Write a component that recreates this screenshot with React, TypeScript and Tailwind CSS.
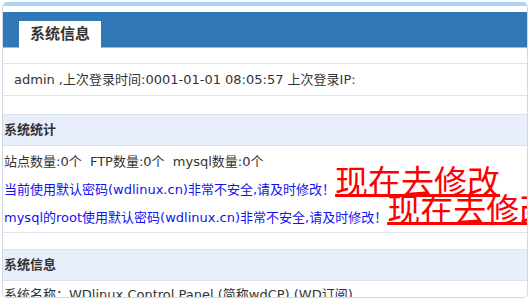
import React from "react";

export default function App() {
  const font = { fontFamily: '"DejaVu Sans", "Noto Sans CJK SC", sans-serif' };
  return (
    <div className="w-[530px] h-[300px] bg-white p-[2px]" style={font}>
      <div className="h-[296px] rounded-[5px] border border-[#d3d7e3] border-t-0 overflow-hidden bg-white text-[13px] text-[#333]">
        <div className="h-[4px] bg-[#a9d2f5]" />
        <div className="h-[6px] bg-white" />
        <div className="h-[36px] bg-[#3178b6] border-b border-[#8fc0ec] flex items-end pl-[16px]">
          <div className="h-[27px] w-[82px] bg-white flex items-center justify-center text-[15px] text-[#333] font-semibold -mb-px">
            系统信息
          </div>
        </div>
        <div className="h-[15px]" />
        <div className="h-[33px] border-y border-[#dfe2ea] flex items-center pl-[11px] whitespace-nowrap">
          admin ,上次登录时间:0001-01-01 08:05:57 上次登录IP:
        </div>
        <div className="h-[18px]" />
        <div className="h-[32px] bg-[#e8eefc] border-y border-[#dde1ec] flex items-center pl-[1px] font-bold">
          系统统计
        </div>
        <div className="leading-[28px] pl-[1px] whitespace-nowrap border-b border-[#dfe2ea] pt-[2px]">
          <div>站点数量:0个&nbsp; FTP数量:0个&nbsp; mysql数量:0个</div>
          <div className="text-[#1212f0]">
            当前使用默认密码(wdlinux.cn)非常不安全,请及时修改！
            <a className="text-[33px] leading-[0px] text-[#ff0000] underline decoration-[3px] underline-offset-[0px]">现在去修改</a>
          </div>
          <div className="text-[#1212f0]">
            mysql的root使用默认密码(wdlinux.cn)非常不安全,请及时修改！
            <a className="text-[33px] leading-[0px] text-[#ff0000] underline decoration-[3px] underline-offset-[0px]">现在去修改</a>
          </div>
        </div>
        <div className="h-[16px]" />
        <div className="h-[32px] bg-[#e8eefc] border-y border-[#dde1ec] flex items-center pl-[1px] font-bold">
          系统信息
        </div>
        <div className="leading-[28px] pl-[1px] whitespace-nowrap">
          系统名称：WDlinux Control Panel (简称wdCP) (WD订阅)
        </div>
      </div>
    </div>
  );
}
